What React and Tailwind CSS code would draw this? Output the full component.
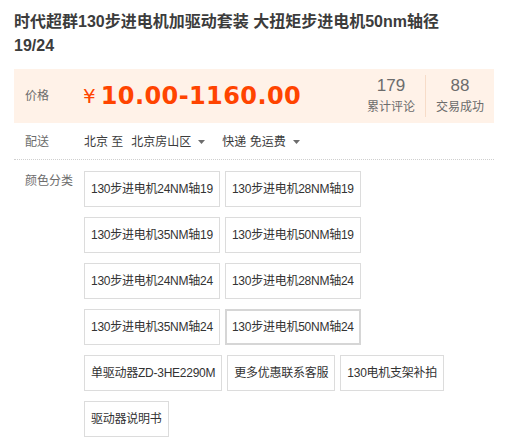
import React from "react";

const FONT = { fontFamily: '"Liberation Sans", "Noto Sans CJK SC", sans-serif' };

function Tri() {
  return (
    <svg width="7" height="4" viewBox="0 0 7 4" className="inline-block">
      <path d="M0 0 L7 0 L3.5 4 Z" fill="#6c6c6c" />
    </svg>
  );
}

const skus = [
  "130步进电机24NM轴19",
  "130步进电机28NM轴19",
  "130步进电机35NM轴19",
  "130步进电机50NM轴19",
  "130步进电机24NM轴24",
  "130步进电机28NM轴24",
  "130步进电机35NM轴24",
  "130步进电机50NM轴24",
  "单驱动器ZD-3HE2290M",
  "更多优惠联系客服",
  "130电机支架补拍",
  "驱动器说明书",
];

export default function App() {
  return (
    <div className="w-[509px] h-[438px] bg-white overflow-hidden pl-[14px] pt-[10px]" style={FONT}>
      <h1 className="w-[462px] text-[16px] leading-[24px] font-bold text-[#3c3c3c]">
        时代超群130步进电机加驱动套装 大扭矩步进电机50nm轴径19/24
      </h1>

      <div className="mt-[11px] w-[480px] h-[54px] bg-[#fff2e8] flex items-center">
        <div className="w-[69px] pl-[11px] text-[12px] text-[#6c6c6c]">价格</div>
        <div className="flex items-center text-[#ff4400]">
          <span className="text-[20px] leading-none mr-[5px]" style={{ fontFamily: '"DejaVu Sans", sans-serif' }}>¥</span>
          <span
            className="text-[24px] leading-none font-bold tracking-[0.4px]"
            style={{ fontFamily: '"DejaVu Sans", sans-serif' }}
          >
            10.00-1160.00
          </span>
        </div>
        <div className="ml-auto flex items-center h-full">
          <div className="flex flex-col items-center px-[10px] text-[#6c6c6c]">
            <div className="text-[17px] leading-[20px]">179</div>
            <div className="mt-[1px] text-[12px] leading-[20px]">累计评论</div>
          </div>
          <div className="w-px h-[42px] bg-[#f7dcc8]" />
          <div className="flex flex-col items-center px-[10px] text-[#6c6c6c]">
            <div className="text-[17px] leading-[20px]">88</div>
            <div className="mt-[1px] text-[12px] leading-[20px]">交易成功</div>
          </div>
        </div>
      </div>

      <div className="w-[480px] pt-[9px] pb-[7px] border-b border-dotted border-[#cfcfcf] flex items-center h-[37px]">
        <div className="w-[70px] pl-[11px] text-[12px] text-[#6c6c6c]">配送</div>
        <div className="flex items-center text-[12px] text-[#3c3c3c]">
          <span>北京 至</span>
          <span className="ml-[8px]">北京房山区</span>
          <span className="ml-[7px] flex items-center"><Tri /></span>
          <span className="ml-[17px]">快递 免运费</span>
          <span className="ml-[7px] flex items-center"><Tri /></span>
        </div>
      </div>

      <div className="mt-[11px] flex">
        <div className="w-[70px] pl-[11px] text-[12px] leading-[20px] text-[#6c6c6c]">颜色分类</div>
        <div className="w-[410px] flex flex-wrap gap-x-[5px] gap-y-[10px]">
          {skus.map((s, i) =>
            i === 7 ? (
              <div
                key={s}
                className="h-[36px] px-[5px] border-2 border-[#d6d6d6] flex items-center text-[12px] tracking-[-0.25px] text-[#333] whitespace-nowrap"
              >
                {s}
              </div>
            ) : (
              <div
                key={s}
                className="h-[36px] px-[6px] border border-[#dcdcdc] flex items-center text-[12px] tracking-[-0.25px] text-[#333] whitespace-nowrap"
              >
                {s}
              </div>
            )
          )}
        </div>
      </div>
    </div>
  );
}
